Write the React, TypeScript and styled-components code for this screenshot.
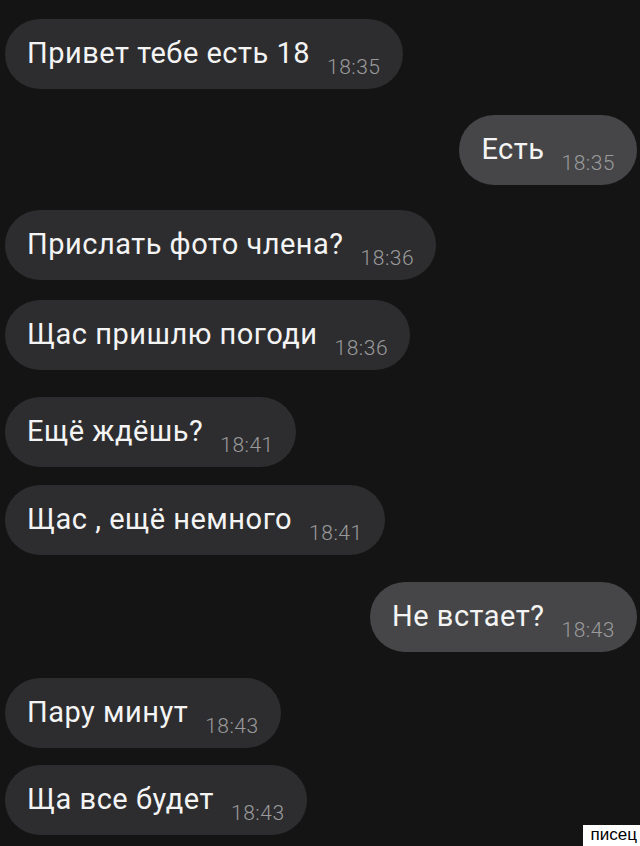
import React from "react";
import styled, { createGlobalStyle } from "styled-components";

interface IMessage {
  text: string;
  time: string;
  mine?: boolean;
  top: number;
}

const messages: IMessage[] = [
  { text: "Привет тебе есть 18", time: "18:35", top: 19 },
  { text: "Есть", time: "18:35", mine: true, top: 26 },
  { text: "Прислать фото члена?", time: "18:36", top: 25 },
  { text: "Щас пришлю погоди", time: "18:36", top: 20 },
  { text: "Ещё ждёшь?", time: "18:41", top: 27 },
  { text: "Щас , ещё немного", time: "18:41", top: 18 },
  { text: "Не встает?", time: "18:43", mine: true, top: 27 },
  { text: "Пару минут", time: "18:43", top: 26 },
  { text: "Ща все будет", time: "18:43", top: 17 },
];

const GlobalStyle = createGlobalStyle`
  html, body {
    margin: 0;
    padding: 0;
    background: #141414;
  }
  #root {
    min-height: 846px;
  }
`;

const Screen = styled.div`
  position: relative;
  width: 640px;
  height: 846px;
  overflow: hidden;
  background: #141414;
  font-family: Roboto, "Noto Sans", sans-serif;
  display: flex;
  flex-direction: column;
  padding: 0 3px 0 5px;
  box-sizing: border-box;
`;

const Row = styled.div<{ $mine?: boolean; $top: number }>`
  display: flex;
  justify-content: ${(p) => (p.$mine ? "flex-end" : "flex-start")};
  margin-top: ${(p) => p.$top}px;
`;

const Bubble = styled.div<{ $mine?: boolean }>`
  height: 70px;
  box-sizing: border-box;
  border-radius: 35px;
  background: ${(p) => (p.$mine ? "#464648" : "#2d2d2f")};
  display: flex;
  align-items: center;
  padding: 0 22px 0 22px;
  gap: 17px;
`;

const Text = styled.span`
  color: #f4f4f4;
  font-size: 29px;
  font-weight: 400;
  letter-spacing: 0.5px;
  line-height: 1;
  margin-top: -2px;
  white-space: nowrap;
`;

const Time = styled.span`
  color: #9a9a9c;
  font-size: 21px;
  font-weight: 300;
  letter-spacing: 0.5px;
  line-height: 1;
  margin-top: 26px;
  white-space: nowrap;
`;

const Watermark = styled.div`
  position: absolute;
  right: 0;
  bottom: 0;
  width: 57px;
  height: 21px;
  background: #ffffff;
  color: #000000;
  font-family: "Liberation Sans", Arial, sans-serif;
  font-size: 17px;
  line-height: 20px;
  text-align: right;
  padding-right: 3px;
  box-sizing: border-box;
`;

export default function App() {
  return (
    <>
      <GlobalStyle />
      <Screen>
        {messages.map((m, i) => (
          <Row key={i} $mine={m.mine} $top={m.top}>
            <Bubble $mine={m.mine}>
              <Text>{m.text}</Text>
              <Time>{m.time}</Time>
            </Bubble>
          </Row>
        ))}
        <Watermark>писец</Watermark>
      </Screen>
    </>
  );
}
